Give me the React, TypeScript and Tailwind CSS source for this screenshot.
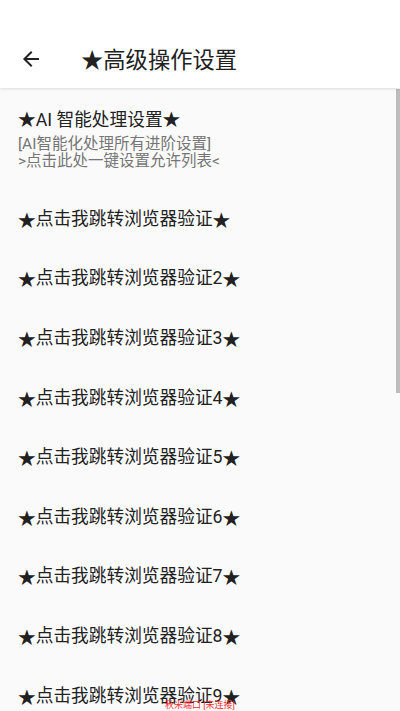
import React from "react";

const items = [
  "★点击我跳转浏览器验证★",
  "★点击我跳转浏览器验证2★",
  "★点击我跳转浏览器验证3★",
  "★点击我跳转浏览器验证4★",
  "★点击我跳转浏览器验证5★",
  "★点击我跳转浏览器验证6★",
  "★点击我跳转浏览器验证7★",
  "★点击我跳转浏览器验证8★",
  "★点击我跳转浏览器验证9★",
];

function Starred({ text }: { text: string }) {
  const parts = text.split("★");
  const out: React.ReactNode[] = [];
  parts.forEach((p, i) => {
    if (i > 0)
      out.push(
        <span key={"s" + i} style={{ fontFamily: '"Noto Sans CJK SC", sans-serif' }}>
          ★
        </span>
      );
    if (p) out.push(<span key={"p" + i}>{p}</span>);
  });
  return <>{out}</>;
}

export default function App() {
  return (
    <div
      className="relative w-[400px] h-[711px] overflow-hidden bg-[#fafafa]"
      style={{ fontFamily: '"Roboto", "Noto Sans CJK SC", sans-serif' }}
    >
      <header className="relative z-10 h-[88px] bg-white shadow-[0_1px_3px_rgba(0,0,0,0.12)] flex items-end">
        <div className="h-[60px] w-full flex items-center pt-[1px]">
          <div className="w-[62px] flex items-center pl-[19px]">
            <svg width="24" height="24" viewBox="0 0 24 24">
              <path
                d="M20 11H7.83l5.59-5.59L12 4l-8 8 8 8 1.41-1.41L7.83 13H20v-2z"
                fill="#212121"
              />
            </svg>
          </div>
          <h1 className="ml-[19px] text-[22.3px] leading-[28px] text-[#212121]">
            <Starred text="★高级操作设置" />
          </h1>
        </div>
      </header>

      <div className="flex flex-col">
        <div className="pl-[18px] pt-[18px] pb-[19px] flex flex-col">
          <div className="text-[17.7px] leading-[24px] text-[#212121]">
            <Starred text="★AI 智能处理设置★" />
          </div>
          <div className="mt-[4px] text-[15.5px] leading-[17px] text-[#757575]">[AI智能化处理所有进阶设置]</div>
          <div className="text-[15.5px] leading-[17px] text-[#757575]">&gt;点击此处一键设置允许列表&lt;</div>
        </div>
        {items.map((t) => (
          <div key={t} className="h-[59.6px] pl-[18px] flex items-center text-[17.7px] leading-[24px] text-[#212121]">
            <Starred text={t} />
          </div>
        ))}
      </div>

      <div className="absolute right-0 top-[89px] w-[4px] h-[304px] bg-[#bdbdbd]" />

      <div className="absolute bottom-0 left-0 right-0 flex justify-center">
        <span className="text-[9px] leading-[11px] text-[#ff3030]">秋米端口 [未连接]</span>
      </div>
    </div>
  );
}
